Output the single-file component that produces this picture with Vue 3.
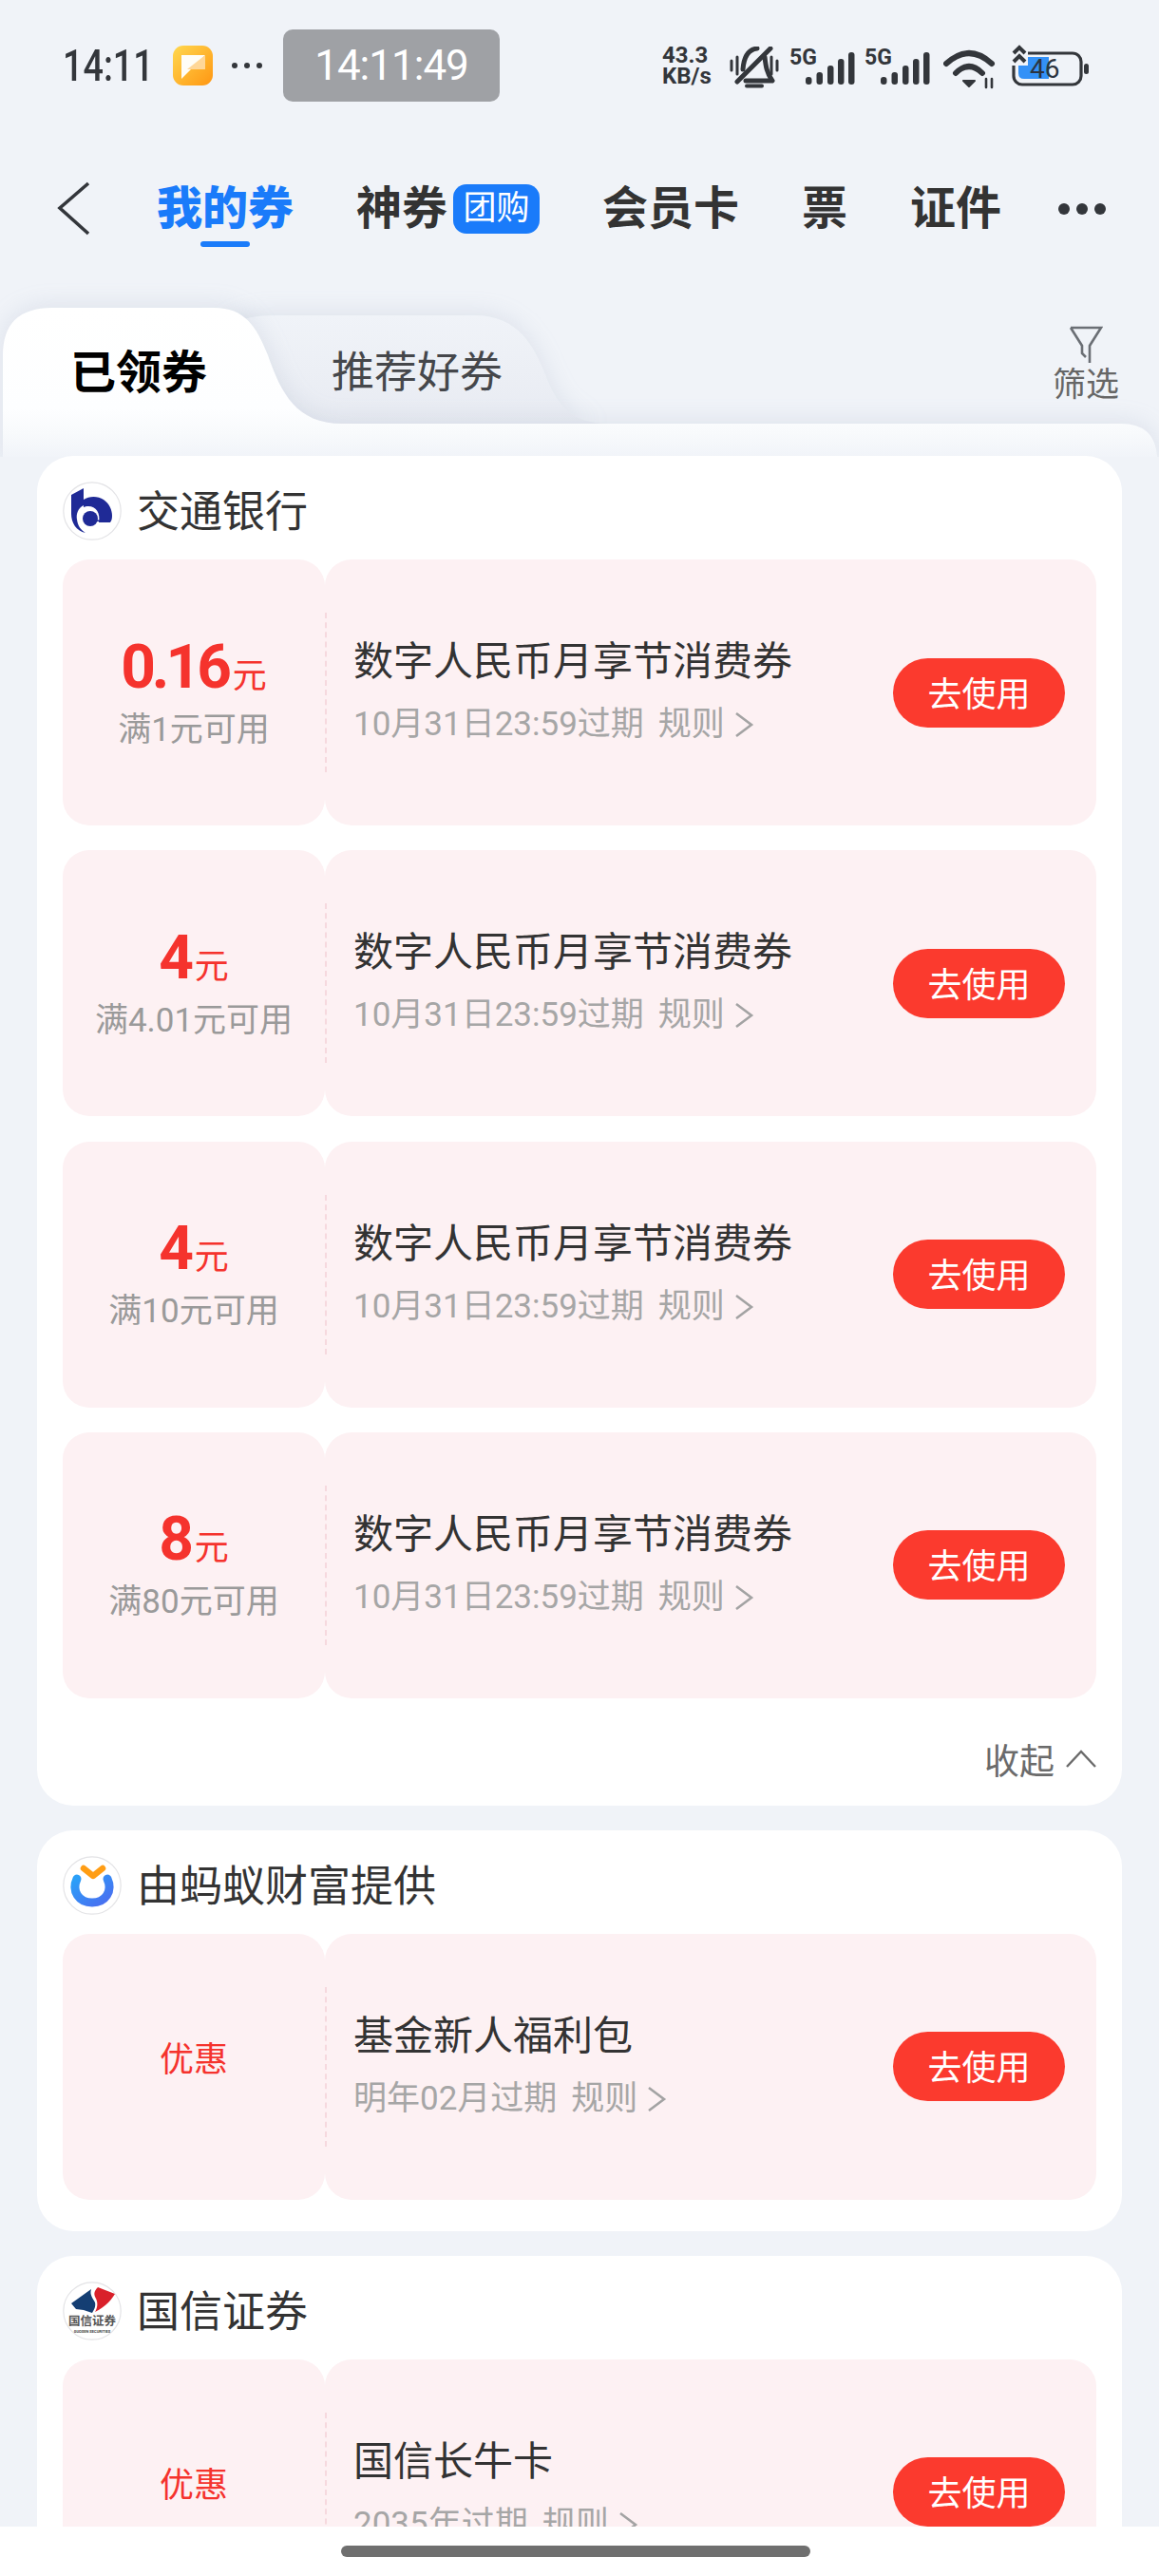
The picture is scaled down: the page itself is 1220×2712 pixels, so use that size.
<template>
  <div class="page">
    <div class="status">
      <span class="clock">14:11</span>
      <svg class="note" width="42" height="42" viewBox="0 0 42 42">
        <defs>
          <linearGradient id="noteBg" x1="0" y1="0" x2="1" y2="1">
            <stop offset="0" stop-color="#ffd84f" />
            <stop offset="1" stop-color="#ff9612" />
          </linearGradient>
        </defs>
        <rect width="42" height="42" rx="11" fill="url(#noteBg)" />
        <path d="M9 10 H34 L9 35 Z" fill="#fffdf6" />
        <path d="M34 10 V25 H15 Z" fill="#ffd798" />
      </svg>
      <span class="status_dots"><i></i><i></i><i></i></span>
      <span class="timer">14:11:49</span>

      <div class="status_right">
        <div class="speed"><span>43.3</span><span>KB/s</span></div>
        <svg class="bell" width="52" height="44" viewBox="0 0 52 44" fill="none" stroke="#33363b">
          <path d="M2 15 V25 M8 11 V29 M44 11 V29 M50 15 V25" stroke-width="3" stroke-linecap="round" />
          <path d="M14 24 C15 11 20 3 29 2 M37 11 C38 20 39 28 45 36 H17" stroke-width="5" stroke-linecap="round" stroke-linejoin="round" />
          <path d="M43 2 L8 37" stroke-width="5" stroke-linecap="round" />
          <path d="M18 41.5 H34" stroke-width="4" stroke-linecap="round" />
        </svg>
        <svg v-for="n in 2" :key="n" class="signal" width="70" height="44" viewBox="0 0 70 44">
          <text x="1" y="22" class="five_g">5G</text>
          <rect v-for="b in bars" :key="b.x" :x="b.x" :y="43 - b.h" width="6.5" :height="b.h" rx="3" fill="#33363b" />
        </svg>
        <svg class="wifi" width="56" height="44" viewBox="0 0 56 44" fill="none" stroke="#33363b" stroke-linecap="round">
          <path d="M3 17 Q27 -5 51 17" stroke-width="6" />
          <path d="M13 27 Q27 13 41 27" stroke-width="6" />
          <path d="M21 35 H33 L27 41 Z" fill="#33363b" stroke="#33363b" stroke-width="2" stroke-linejoin="round" />
          <path d="M45 33 V42 M51 33 V42" stroke-width="2.6" />
        </svg>
        <svg class="battery" width="84" height="46" viewBox="0 0 84 46">
          <rect x="3" y="9" width="71" height="33" rx="9" fill="none" stroke="#33363b" stroke-width="3.2" />
          <path d="M8 13 H40 V36 H14 Q8 36 8 30 Z" fill="#3391f7" />
          <text x="20" y="35" class="bat_num">46</text>
          <rect x="77" y="20" width="5" height="11" rx="2.5" fill="#33363b" />
          <path d="M0 1 H18 V22 H0 Z" fill="#f0f3f8" />
          <path d="M3 9 L9 3 L15 9 M3 18 L9 12 L15 18" fill="none" stroke="#33363b" stroke-width="4" />
        </svg>
      </div>
    </div>

    <div class="nav">
      <svg class="back" width="36" height="58" viewBox="0 0 36 58" fill="none" stroke="#33363b" stroke-width="3.6">
        <path d="M33 2 L3 28 L33 55" />
      </svg>
      <div class="nav_item active">我的券</div>
      <div class="nav_item">神券<span class="badge">团购</span></div>
      <div class="nav_item">会员卡</div>
      <div class="nav_item">票</div>
      <div class="nav_item">证件</div>
      <div class="nav_more"><i></i><i></i><i></i></div>
    </div>

    <div class="tabs">
      <svg class="tabs_bg" width="1220" height="232" viewBox="0 0 1220 232">
        <defs>
          <linearGradient id="otherFill" x1="0" y1="0" x2="0" y2="1">
            <stop offset="0" stop-color="#f0f3f8" />
            <stop offset="1" stop-color="#e8ebf2" />
          </linearGradient>
          <linearGradient id="activeFill" gradientUnits="userSpaceOnUse" x1="0" y1="75" x2="0" y2="232">
            <stop offset="0" stop-color="#ffffff" />
            <stop offset="0.68" stop-color="#fdfeff" />
            <stop offset="0.84" stop-color="#f8fafc" />
            <stop offset="1" stop-color="#f1f4f9" />
          </linearGradient>
        </defs>
        <path class="tab_shadow" d="M230 197 V118 Q230 83 290 83 H500 C545 83 562 115 574 145 C585 175 600 197 640 197 Z" fill="url(#otherFill)" />
        <path class="tab_shadow" d="M3 240 V125 Q3 75 55 75 H225 C258 75 270 95 282 125 C296 165 312 197 360 197 H1180 Q1216 197 1218 232 V240 Z" fill="url(#activeFill)" />
      </svg>
      <div class="tab_label active">已领券</div>
      <div class="tab_label">推荐好券</div>
      <div class="filter">
        <svg width="36" height="40" viewBox="0 0 36 40" fill="none" stroke="#6b6f75" stroke-width="2.6">
          <path d="M2 2 H34 L22 21 V39 M2 2 L14 21 V29 L18 33" />
        </svg>
        <span>筛选</span>
      </div>
    </div>

    <div v-for="card in cards" :key="card.name" class="card">
      <div class="card_head">
        <svg class="logo" width="62" height="62" viewBox="0 0 62 62">
          <defs>
            <clipPath :id="'clip_' + card.logo"><circle cx="31" cy="31" r="30" /></clipPath>
            <linearGradient :id="'ring_' + card.logo" x1="0" y1="0" x2="1" y2="1">
              <stop offset="0" stop-color="#2ba0f8" />
              <stop offset="1" stop-color="#4a6df0" />
            </linearGradient>
          </defs>
          <circle cx="31" cy="31" r="30.2" fill="#fff" stroke="#e3e3e6" stroke-width="1.2" />
          <g v-if="card.logo == 'bocom'" fill="#1f2a96">
            <path d="M9 14 L22 7 V25 C16 28 14 34 15 40 C16 47 19 51 24 54 C14 52 9 43 9 34 Z" />
            <path d="M22 19 C28 15 37 15 43 19 C49 23 52 30 52 36 C52 39 51.5 41 50 43 H38 C40 33 35 26 27 26 C25 26 23 26.5 22 27 Z" />
            <circle cx="29" cy="39" r="8" />
            <path d="M33 40.5 H50 V42 H33 Z" />
          </g>
          <g v-else-if="card.logo == 'ant'" fill="none">
            <path d="M15 24 C9 37 17 49 31 49 C45 49 53 37 47 24" :stroke="'url(#ring_' + card.logo + ')'" stroke-width="9" stroke-linecap="round" />
            <path d="M22 13 L32 21 L42 13" stroke="#ff9d14" stroke-width="6.5" stroke-linecap="round" stroke-linejoin="round" />
          </g>
          <g v-else :clip-path="'url(#clip_' + card.logo + ')'">
            <path d="M9 23 L30 8 C28 14 32 18 34 22 C35 26 33 30 31 33 L22 30 L14 29 Z" fill="#143e73" />
            <path d="M37 6 L55 13 C52 18 46 26 34 32 C37 27 37 22 35 18 C33 14 32 11 37 6 Z" fill="#d9202a" />
            <text x="31" y="46" class="gs_cn">国信证券</text>
            <text x="31" y="54" class="gs_en">GUOSEN SECURITIES</text>
          </g>
        </svg>
        <span class="card_name">{{ card.name }}</span>
      </div>
      <div class="coupons">
        <div v-for="(c, i) in card.coupons" :key="i" class="coupon">
          <div class="coupon_left">
            <template v-if="c.amount">
              <div class="amount">{{ c.amount }}<small>元</small></div>
              <div class="limit">{{ c.limit }}</div>
            </template>
            <div v-else class="perk">优惠</div>
          </div>
          <div class="coupon_right">
            <div class="coupon_info">
              <div class="coupon_title">{{ c.title }}</div>
              <div class="coupon_sub">
                <span>{{ c.expire }}</span>
                <span class="rule">规则</span>
                <svg width="22" height="28" viewBox="0 0 22 28" fill="none" stroke="#a3a3a3" stroke-width="2.6">
                  <path d="M3 2 L19 14 L3 26" />
                </svg>
              </div>
            </div>
            <div class="use_btn">去使用</div>
          </div>
        </div>
      </div>
      <div v-if="card.collapse" class="collapse">
        <span>收起</span>
        <svg width="32" height="20" viewBox="0 0 32 20" fill="none" stroke="#6b6b6b" stroke-width="2.4">
          <path d="M1 18 L16 2 L31 18" />
        </svg>
      </div>
    </div>

    <div class="home_bar"><div class="home_line"></div></div>
  </div>
</template>

<script setup>
const bars = [
  { x: 18, h: 8 },
  { x: 29.5, h: 13 },
  { x: 41, h: 20 },
  { x: 52, h: 27 },
  { x: 63, h: 34 },
]

const bocom_title = '数字人民币月享节消费券'
const bocom_expire = '10月31日23:59过期'

const cards = [
  {
    name: '交通银行',
    logo: 'bocom',
    collapse: true,
    coupons: [
      { amount: '0.16', limit: '满1元可用', title: bocom_title, expire: bocom_expire },
      { amount: '4', limit: '满4.01元可用', title: bocom_title, expire: bocom_expire },
      { amount: '4', limit: '满10元可用', title: bocom_title, expire: bocom_expire },
      { amount: '8', limit: '满80元可用', title: bocom_title, expire: bocom_expire },
    ],
  },
  {
    name: '由蚂蚁财富提供',
    logo: 'ant',
    coupons: [{ title: '基金新人福利包', expire: '明年02月过期' }],
  },
  {
    name: '国信证券',
    logo: 'guosen',
    coupons: [{ title: '国信长牛卡', expire: '2035年过期' }],
  },
]
</script>

<style>
body {
  margin: 0;
  background: #f0f3f8;
}
</style>

<style scoped>
.page {
  position: relative;
  width: 1220px;
  height: 2712px;
  overflow: hidden;
  background: #f0f3f8;
  font-family: Roboto, "Noto Sans CJK SC", sans-serif;
  color: #333;
}

/* status bar */
.status {
  display: flex;
  align-items: center;
  height: 76px;
  padding-top: 31px;
  padding-left: 66px;
}
.clock {
  display: inline-block;
  width: 93px;
  font-size: 46px;
  font-weight: 500;
  color: #33363b;
  transform: scaleX(0.82);
  transform-origin: left center;
  white-space: nowrap;
}
.note {
  margin-left: 23px;
}
.status_dots {
  display: flex;
  gap: 7px;
  margin-left: 20px;
}
.status_dots i {
  width: 6px;
  height: 6px;
  border-radius: 50%;
  background: #33363b;
}
.timer {
  display: flex;
  align-items: center;
  justify-content: center;
  width: 228px;
  height: 76px;
  margin-left: 22px;
  border-radius: 10px;
  background: #9fa1a5;
  color: #fff;
  font-size: 44px;
  letter-spacing: -1px;
}
.status_right {
  display: flex;
  align-items: flex-start;
  height: 48px;
  margin-left: 171px;
  margin-top: 4px;
}
.speed {
  display: flex;
  flex-direction: column;
  width: 71px;
  font-size: 24px;
  font-weight: 700;
  line-height: 22px;
  color: #33363b;
}
.bell {
  margin-top: 2px;
}
.signal {
  margin-left: 10px;
  margin-right: -2px;
  margin-top: -1px;
}
.signal + .signal {
  margin-left: 11px;
}
.five_g {
  font-size: 23px;
  font-weight: 700;
  fill: #33363b;
}
.wifi {
  margin-left: 16px;
  margin-top: 3px;
}
.battery {
  margin-left: 15px;
}
.bat_num {
  font-size: 28px;
  fill: #2b3440;
}

/* nav */
.nav {
  display: flex;
  align-items: center;
  gap: 66px;
  height: 58px;
  margin-top: 84px;
  padding-left: 60px;
}
.back {
  margin-right: 3px;
}
.nav_item {
  position: relative;
  display: flex;
  align-items: center;
  font-size: 48px;
  font-weight: 700;
  line-height: 58px;
  white-space: nowrap;
  color: #333;
}
.nav_item.active {
  font-weight: 900;
  color: #1a7bfa;
}
.nav_item.active::after {
  content: "";
  position: absolute;
  left: 46px;
  bottom: -11px;
  width: 52px;
  height: 6px;
  border-radius: 3px;
  background: #1a7bfa;
}
.badge {
  display: flex;
  align-items: center;
  justify-content: center;
  width: 91px;
  height: 52px;
  margin-left: 6px;
  border-radius: 14px;
  background: #1a7bfa;
  color: #fff;
  font-size: 35px;
  font-weight: 400;
}
.nav_more {
  display: flex;
  gap: 7px;
  margin-left: -6px;
}
.nav_more i {
  width: 12px;
  height: 12px;
  border-radius: 50%;
  background: #33363b;
}

/* tabs */
.tabs {
  position: relative;
  display: flex;
  align-items: flex-start;
  height: 231px;
  padding-top: 94px;
  box-sizing: border-box;
}
.tabs_bg {
  position: absolute;
  left: 0;
  top: 0;
}
.tab_shadow {
  filter: drop-shadow(0 -2px 12px rgba(120, 135, 170, 0.16));
}
.tab_label {
  position: relative;
  margin-top: 20px;
  font-size: 45px;
  line-height: 60px;
  color: #45474b;
}
.tab_label.active {
  margin-left: 74px;
  font-size: 48px;
  font-weight: 700;
  color: #000;
}
.tab_label + .tab_label {
  margin-left: 131px;
}
.filter {
  position: relative;
  display: flex;
  flex-direction: column;
  align-items: center;
  margin-left: auto;
  margin-right: 42px;
  font-size: 35px;
  line-height: 46px;
  color: #666;
}

/* cards */
.card {
  position: relative;
  margin: 0 39px 26px;
  padding: 27px 27px 33px;
  border-radius: 38px;
  background: #fff;
}
.card_head {
  display: flex;
  align-items: center;
  gap: 16px;
  height: 62px;
  margin-bottom: 20px;
}
.card_name {
  margin-bottom: 5px;
  font-size: 45px;
  color: #333;
}
.coupons {
  display: flex;
  flex-direction: column;
  gap: 26.3px;
}
.coupon {
  display: flex;
  height: 280px;
}
.coupon_left {
  position: relative;
  display: flex;
  flex-direction: column;
  align-items: center;
  justify-content: center;
  width: 276px;
  border-radius: 28px;
  background: #fdf1f3;
}
.coupon_left::after {
  content: "";
  position: absolute;
  right: -2px;
  top: 56px;
  bottom: 56px;
  border-right: 2px dashed #f6d9de;
}
.amount {
  font-size: 64px;
  font-weight: 700;
  line-height: 70px;
  letter-spacing: -4px;
  color: #f5332d;
}
.amount small {
  margin-left: 5px;
  font-size: 36px;
  font-weight: 400;
  letter-spacing: 0;
}
.limit {
  font-size: 35px;
  line-height: 44px;
  color: #9a9a9a;
}
.perk {
  margin-top: -22px;
  font-size: 36px;
  color: #f5332d;
}
.coupon_right {
  display: flex;
  flex: 1;
  align-items: center;
  justify-content: space-between;
  padding: 0 33px 0 30px;
  border-radius: 28px;
  background: #fdf1f3;
}
.coupon_info {
  padding-bottom: 5px;
}
.coupon_title {
  font-size: 42px;
  line-height: 60px;
  color: #333;
}
.coupon_sub {
  display: flex;
  align-items: center;
  margin-top: 13px;
  font-size: 35px;
  line-height: 46px;
  color: #a6a6a6;
}
.rule {
  margin-left: 15px;
  margin-right: 9px;
}
.use_btn {
  display: flex;
  align-items: center;
  justify-content: center;
  width: 181px;
  height: 73px;
  padding-bottom: 3px;
  box-sizing: border-box;
  border-radius: 37px;
  background: #fb3a2e;
  color: #fff;
  font-size: 36px;
}
.collapse {
  display: flex;
  align-items: center;
  justify-content: flex-end;
  gap: 12px;
  height: 36px;
  margin-top: 46px;
  margin-bottom: -2px;
  font-size: 37px;
  color: #6b6b6b;
}

/* gesture bar */
.home_bar {
  position: absolute;
  left: 0;
  right: 0;
  bottom: 0;
  height: 52px;
  background: #fff;
}
.home_line {
  width: 494px;
  height: 12px;
  margin: 20px 0 0 359px;
  border-radius: 6px;
  background: #6f6f6f;
}
.gs_cn {
  font-size: 12.5px;
  font-weight: 700;
  fill: #555;
  text-anchor: middle;
}
.gs_en {
  font-size: 4px;
  font-weight: 700;
  fill: #444;
  text-anchor: middle;
}
</style>
